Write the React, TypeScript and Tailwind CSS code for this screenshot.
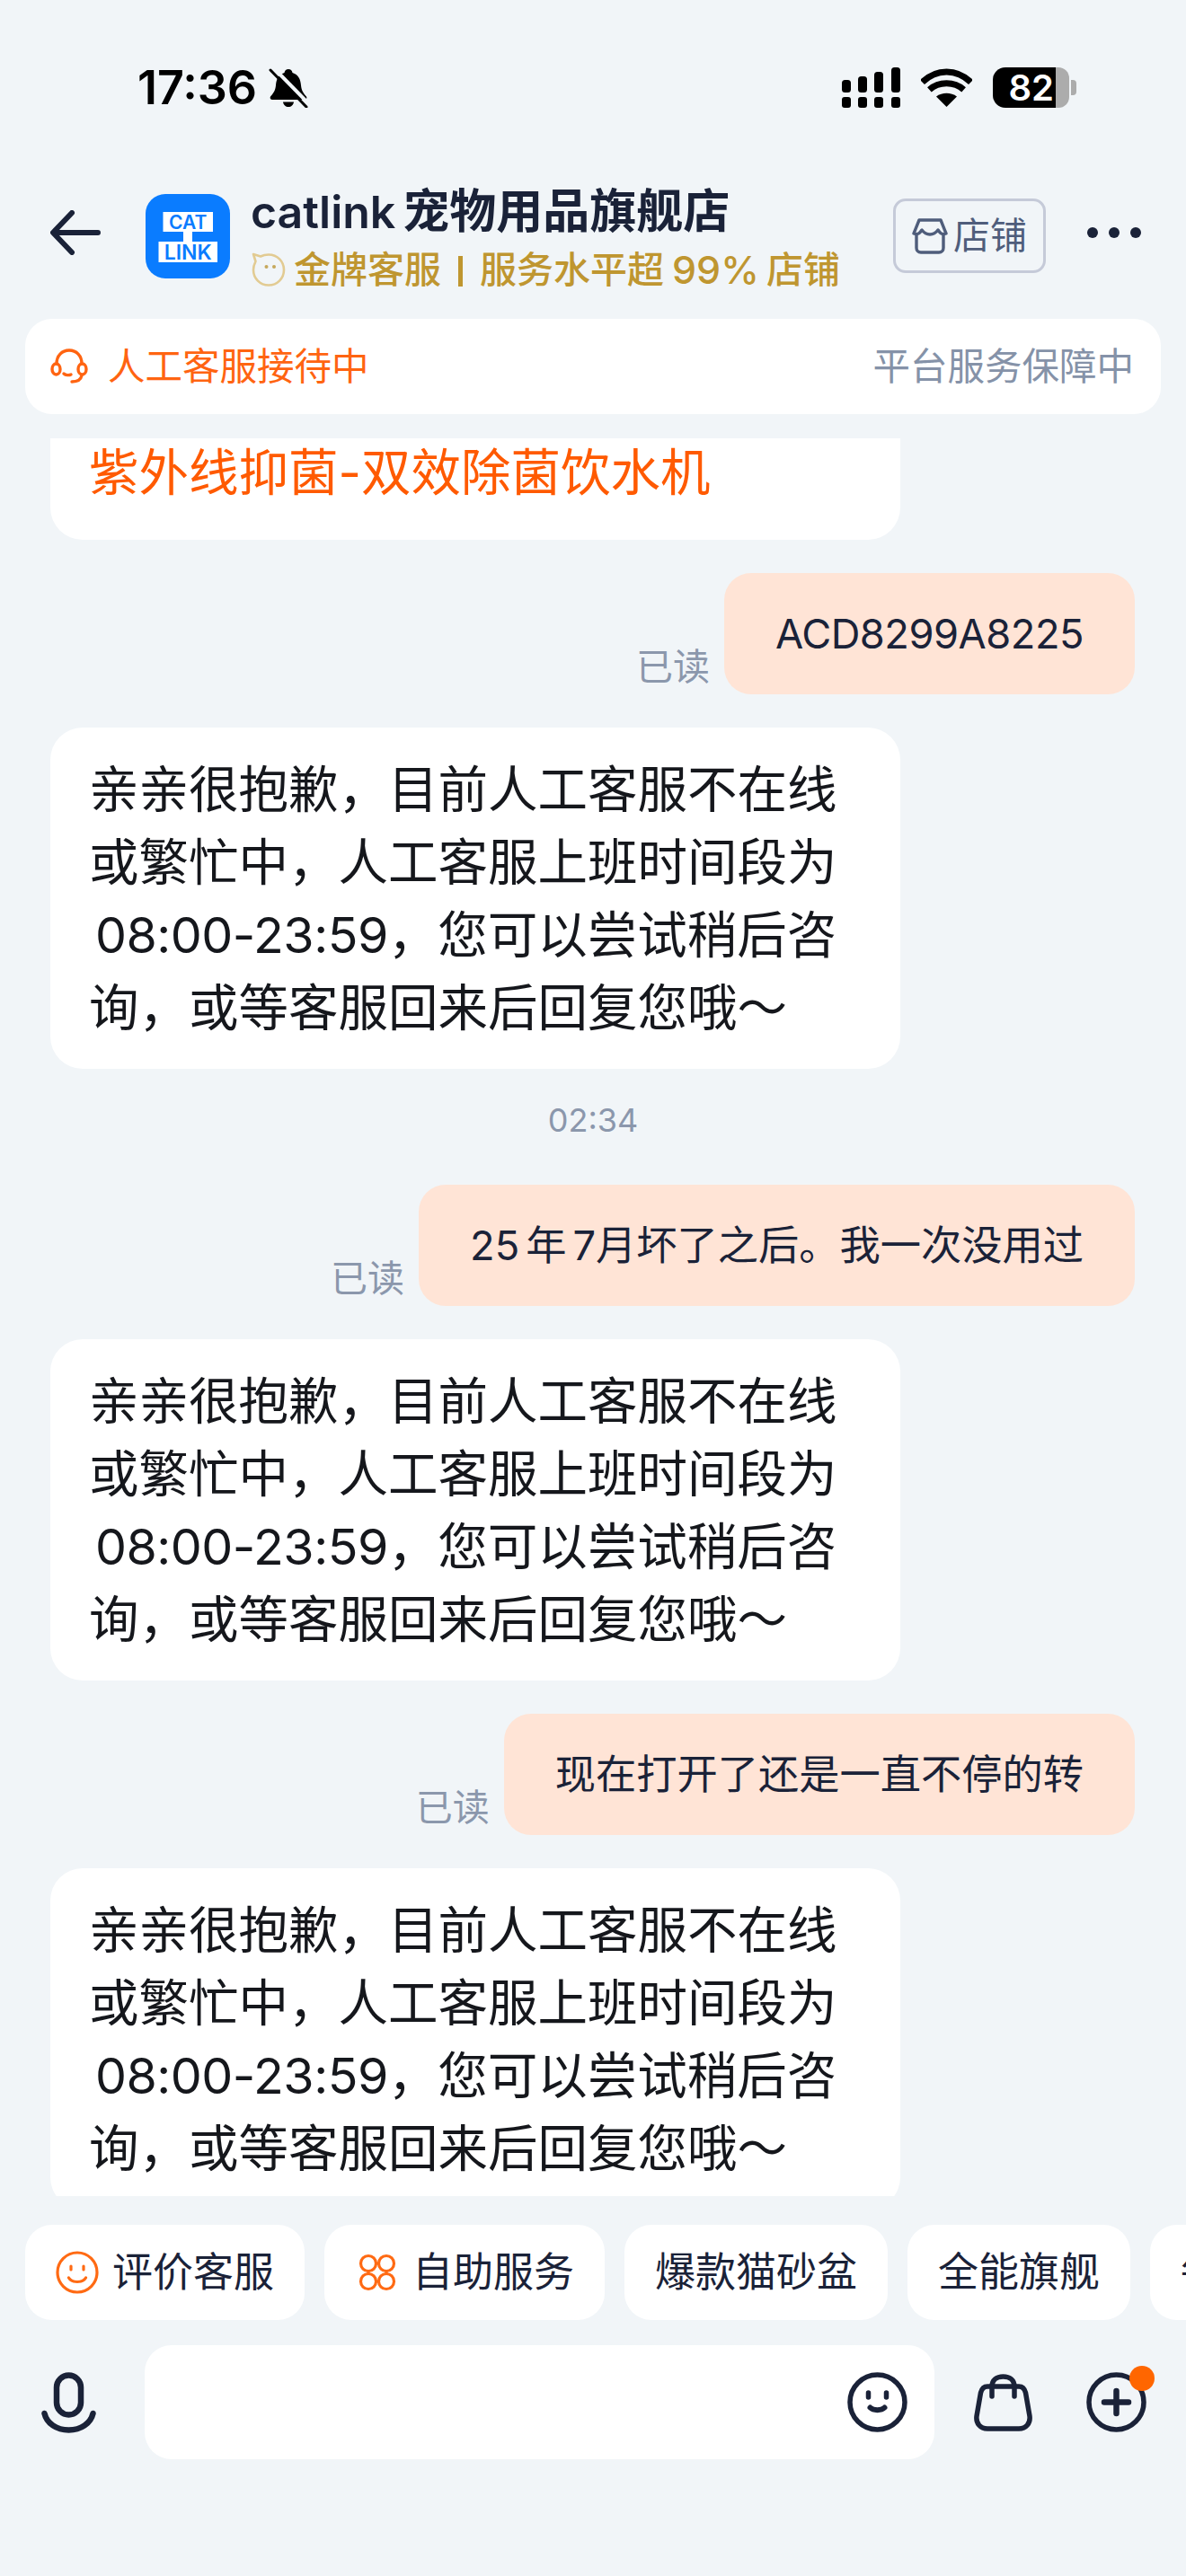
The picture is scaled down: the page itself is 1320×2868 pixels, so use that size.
const replyLines: React.ReactNode[] = [
  "亲亲很抱歉，目前人工客服不在线",
  "或繁忙中，人工客服上班时间段为",
  <><span className="tracking-[-0.5px]">08:00-23:59</span>，您可以尝试稍后咨</>,
  "询，或等客服回来后回复您哦～",
];

const Reply = () => (
  <div className="w-[946px] rounded-[36px] bg-white px-[43px] py-[28px] text-[55.5px] leading-[81px] text-[#15171c] whitespace-nowrap">
    {replyLines.map((line, i) => (
      <div key={i} className={i === 2 ? "pl-[7px]" : ""}>{line}</div>
    ))}
  </div>
);

const Sent = ({ children }: { children: React.ReactNode }) => (
  <div className="flex items-end justify-end gap-[16px] pr-[57px]">
    <span className="mb-[6px] text-[41px] leading-[50px] text-[#8b97ac]">已读</span>
    <div className="flex h-[135px] items-center rounded-[30px] bg-[#ffe4d6] px-[57px] text-[45.25px] text-[#1a2238] whitespace-nowrap">
      {children}
    </div>
  </div>
);

const Chip = ({ icon, text }: { icon?: React.ReactNode; text: string }) => (
  <div className="flex h-[106px] shrink-0 items-center gap-[15px] rounded-[30px] bg-white px-[34px] text-[45px] text-[#1a2238] whitespace-nowrap">
    {icon}
    <span>{text}</span>
  </div>
);

const BackArrow = () => (
  <svg width="56" height="50" viewBox="0 0 56 50" fill="none" stroke="#1a2238" strokeWidth="6" strokeLinecap="round" strokeLinejoin="round">
    <path d="M53 25H4M24 3L3 25L24 47" />
  </svg>
);

const Logo = () => (
  <svg width="94" height="94" viewBox="0 0 94 94">
    <rect width="94" height="94" rx="22" fill="#0a7cff" />
    <rect x="19.5" y="20" width="55.5" height="22" fill="#fff" />
    <rect x="14.5" y="53" width="65.5" height="23" fill="#fff" />
    <rect x="42" y="40" width="10" height="15" fill="#fff" />
    <text x="47.2" y="38.500" textAnchor="middle" fontFamily="Inter" fontWeight="600" fontSize="21" fill="#0a7cff">CAT</text>
    <text x="47.2" y="72.500" textAnchor="middle" fontFamily="Inter" fontWeight="600" fontSize="23" fill="#0a7cff">LINK</text>
  </svg>
);

const CatBadge = () => (
  <svg width="40" height="40" viewBox="0 0 40 40" fill="none">
    <path d="M3 3L11 5.5C14 4 17 3.5 20 3.5C29.5 3.5 37 11 37 20.5C37 30 29.5 37.5 20 37.5C10.5 37.5 3 30 3 20.5C3 16 4.5 13 5.5 11Z" stroke="#e2cb92" strokeWidth="2.6" strokeLinejoin="round" />
    <circle cx="17.5" cy="17" r="2" fill="#c6a85c" />
    <circle cx="26" cy="17" r="2" fill="#c6a85c" />
  </svg>
);

const StoreIcon = () => (
  <svg width="40" height="40" viewBox="0 0 40 40" fill="none" stroke="#4f5d7b" strokeWidth="3.4" strokeLinejoin="round" strokeLinecap="round">
    <path d="M8 2H32L38 17C33 19 31 16 29 13C26 17 23 18 20 18C17 18 14 17 11 13C9 16 7 19 2 17Z" />
    <path d="M5 18V33C5 36 7 38 10 38H30C33 38 35 36 35 33V18" />
  </svg>
);

const Headset = () => (
  <svg width="42" height="40" viewBox="0 0 42 40" fill="none" stroke="#ff6411" strokeWidth="3.4" strokeLinecap="round">
    <path d="M7 17C7 8 13 2 21 2C29 2 35 8 35 17" />
    <ellipse cx="6.5" cy="23" rx="4.5" ry="6" />
    <ellipse cx="35.5" cy="23" rx="4.5" ry="6" />
    <path d="M15 28C17 30 21 30 23 29M35 30C34 35 30 37 24 37" />
  </svg>
);

const SmileOrange = () => (
  <svg width="48" height="48" viewBox="0 0 48 48" fill="none" stroke="#ff6a13" strokeWidth="3.2" strokeLinecap="round">
    <circle cx="24" cy="24" r="22" />
    <path d="M17 17V21M31 17V21" />
    <path d="M14.5 30C18 36 30 36 33.5 30" />
  </svg>
);

const Flower = () => (
  <svg className="ml-[4px] mr-[3px]" width="42" height="42" viewBox="0 0 42 42" fill="none" stroke="#ff6a13" strokeWidth="3.2">
    <circle cx="11" cy="11" r="8.5" />
    <circle cx="31" cy="11" r="8.5" />
    <circle cx="11" cy="31" r="8.5" />
    <circle cx="31" cy="31" r="8.5" />
    <path d="M19.5 11H22.5M11 19.5V22.5M31 19.5V22.5M19.5 31H22.5" />
  </svg>
);

const Mic = () => (
  <svg width="61" height="68" viewBox="0 0 61 68" fill="none" stroke="#1a2238" strokeWidth="6.5" strokeLinecap="round">
    <rect x="17" y="3.5" width="27" height="44" rx="13.5" />
    <path d="M3.5 46C6 57 17 64.5 30.5 64.5C44 64.5 55 57 57.5 46" />
  </svg>
);

const Face = () => (
  <svg width="67" height="67" viewBox="0 0 67 67" fill="none" stroke="#1a2238" strokeLinecap="round">
    <circle cx="33.5" cy="33.5" r="30.5" strokeWidth="5.5" />
    <path d="M23.5 23V28M43.5 23V28" strokeWidth="5.5" />
    <path d="M25.5 39.5C29 43 38 43 41.5 39.5" strokeWidth="6" />
  </svg>
);

const Bag = () => (
  <svg width="65" height="64" viewBox="0 0 65 64" fill="none" stroke="#1a2238" strokeWidth="5.5" strokeLinecap="round" strokeLinejoin="round">
    <path d="M15 14H50C54 14 56.5 17 57.5 21L62 47C63 55 58 61 50 61H15C7 61 2 55 3 47L7.500 21C8.500 17 11 14 15 14Z" />
    <path d="M20 25V14C20 7 25 3 32.500 3C40 3 45 7 45 14V25" />
  </svg>
);

const PlusCircle = () => (
  <svg width="67" height="67" viewBox="0 0 67 67" fill="none" stroke="#1a2238" strokeLinecap="round">
    <circle cx="33.5" cy="33.500" r="30.5" strokeWidth="5.5" />
    <path d="M33.5 21V46M20 33.5H47" strokeWidth="6.500" />
  </svg>
);

const Signal = () => (
  <svg width="65" height="45" viewBox="0 0 65 45" fill="#000">
    <rect x="0" y="14" width="10" height="14" rx="3.500" />
    <rect x="18" y="10" width="10" height="18" rx="3.500" />
    <rect x="36" y="5" width="10" height="23" rx="3.500" />
    <rect x="55" y="0" width="10" height="28" rx="3.500" />
    <rect x="0" y="33" width="10" height="12" rx="3" />
    <rect x="18" y="33" width="10" height="12" rx="3" />
    <rect x="36" y="33" width="10" height="12" rx="3" />
    <rect x="55" y="33" width="10" height="12" rx="3" />
  </svg>
);

const Wifi = () => (
  <svg width="57" height="43" viewBox="0 0 57 43">
    <path d="M28.5 43L17 31.500C23.500 26.500 33.500 26.500 40 31.500Z" fill="#000" />
    <path d="M9.400 23.900C20 14.500 37 14.500 47.600 23.900" fill="none" stroke="#000" strokeWidth="7" />
    <path d="M1.500 15.500C17 0 40 0 55.500 15.500" fill="none" stroke="#000" strokeWidth="7" />
  </svg>
);

const MutedBell = () => (
  <svg width="44" height="44" viewBox="0 0 44 44">
    <path d="M22 1C24.500 1 26 2.500 26.500 5C33 7 35.500 12 36 19C36.500 25 39 28 42 31.500C43 33 42 35 40 35H4C2 35 1 33 2 31.500C5 28 7.500 25 8 19C8.500 12 11 7 17.500 5C18 2.500 19.500 1 22 1Z" fill="#000" />
    <path d="M16 37.500H28C27.500 41 25 43 22 43C19 43 16.500 41 16 37.500Z" fill="#000" />
    <path d="M6 0L46 41" stroke="#f1f5f8" strokeWidth="4" />
    <path d="M2 2L42 43" stroke="#000" strokeWidth="3" strokeLinecap="round" />
  </svg>
);

export default function App() {
  return (
    <div className="flex h-[2868px] w-[1320px] flex-col overflow-hidden bg-[#f1f5f8] font-[Inter,'Noto_Sans_CJK_SC',sans-serif]">
      {/* status bar */}
      <div className="flex h-[216px] shrink-0 items-start justify-between pl-[153px] pr-[122px] pt-[70px]">
        <div className="flex h-[55px] items-center gap-[13px]">
          <span className="text-[52px] font-semibold leading-none text-black">17:36</span>
          <MutedBell />
        </div>
        <div className="flex h-[55px] items-center gap-[23px]">
          <Signal />
          <Wifi />
          <div className="flex items-center">
            <div className="flex h-[45px] w-[70px] items-center justify-end rounded-l-[14px] bg-black pr-[2px] text-[40px] font-semibold text-white">82</div>
            <div className="h-[45px] w-[15px] rounded-r-[12px] bg-[#acacac]" />
            <div className="ml-[2px] h-[17px] w-[6px] rounded-r-[4px] bg-[#acacac]" />
          </div>
        </div>
      </div>

      {/* header */}
      <div className="flex h-[94px] shrink-0 items-start pl-[56px]">
        <div className="mt-[18px]"><BackArrow /></div>
        <div className="ml-[50px]"><Logo /></div>
        <div className="ml-[23px] w-[700px]">
          <div className="flex h-[40px] items-center text-[50px] font-semibold leading-none text-[#1a2238] whitespace-nowrap">
            catlink<span className="ml-[8px] text-[52px]">宠物用品旗舰店</span>
          </div>
          <div className="mt-[23px] flex h-[42px] items-center text-[41px] font-medium leading-none text-[#bf9630] whitespace-nowrap">
            <CatBadge />
            <span className="ml-[8px]">金牌客服</span>
            <div className="mx-[19px] mt-[4px] h-[34px] w-[5px] bg-[#bf9630]" />
            <span>服务水平超</span>
            <span className="ml-[9px] text-[43px]">99%</span>
            <span className="ml-[8px]">店铺</span>
          </div>
        </div>
        <div className="ml-[15px] mt-[5px] flex h-[83px] w-[170px] items-center justify-center gap-[6px] rounded-[14px] border-[3px] border-[#c5cad8] text-[41px] text-[#4f5d7b]">
          <StoreIcon />
          <span>店铺</span>
        </div>
        <div className="ml-[46px] mt-[37px] flex gap-[12px]">
          <div className="size-[12px] rounded-full bg-[#1a2238]" />
          <div className="size-[12px] rounded-full bg-[#1a2238]" />
          <div className="size-[12px] rounded-full bg-[#1a2238]" />
        </div>
      </div>

      {/* service banner */}
      <div className="mx-[28px] mt-[45px] flex h-[106px] shrink-0 items-center justify-between rounded-[30px] bg-white pl-[28px] pr-[30px] text-[41.5px]">
        <div className="flex items-center gap-[22px] text-[#ff6411]">
          <Headset />
          <span>人工客服接待中</span>
        </div>
        <span className="text-[#8592a8]">平台服务保障中</span>
      </div>

      {/* messages, scrolled so the first and last bubbles are cut off */}
      <div className="mt-[27px] h-[1957px] shrink-0 overflow-hidden pl-[56px]">
        <div className="-mt-[100px] flex flex-col gap-[37px]">
          <div className="h-[213px] w-[946px] rounded-[36px] bg-white px-[43px] pt-[97px] text-[55.5px] leading-[81px] text-[#ff5a00]">
            紫外线抑菌-双效除菌饮水机
          </div>
          <Sent><span className="tracking-[-0.5px]">ACD8299A8225</span></Sent>
          <Reply />
          <div className="mb-[15px] flex h-[40px] w-[1208px] items-center justify-center text-[36px] text-[#8b97ac]">02:34</div>
          <Sent>25<span className="ml-[7px]">年</span><span className="ml-[7px]">7月坏了之后。我一次没用过</span></Sent>
          <Reply />
          <Sent>现在打开了还是一直不停的转</Sent>
          <Reply />
        </div>
      </div>

      {/* quick chips */}
      <div className="mt-[32px] flex shrink-0 gap-[22px] overflow-hidden pl-[28px]">
        <Chip icon={<SmileOrange />} text="评价客服" />
        <Chip icon={<Flower />} text="自助服务" />
        <Chip text="爆款猫砂盆" />
        <Chip text="全能旗舰" />
        <Chip text="每日上新" />
      </div>

      {/* input row */}
      <div className="mt-[28px] flex shrink-0 items-center pl-[46px]">
        <Mic />
        <div className="ml-[54px] flex h-[127px] w-[879px] items-center justify-end rounded-[30px] bg-white pr-[30px]">
          <Face />
        </div>
        <div className="ml-[44px]"><Bag /></div>
        <div className="relative ml-[60px]">
          <PlusCircle />
          <div className="absolute -right-[9px] -top-[7px] size-[28px] rounded-full bg-[#ff6600]" />
        </div>
      </div>
    </div>
  );
}
